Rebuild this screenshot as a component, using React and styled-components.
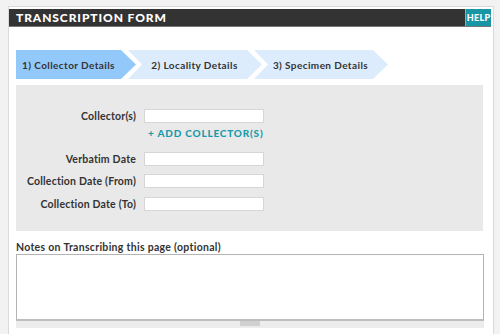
import React from "react";
import styled, { createGlobalStyle } from "styled-components";

const Global = createGlobalStyle`
  html, body { margin: 0; padding: 0; }
  body {
    background: #f2f2f2;
    font-family: Lato, "DejaVu Sans", sans-serif;
    width: 500px;
    height: 334px;
    overflow: hidden;
  }
`;

const Page = styled.div`
  padding: 6px 0 0 8px;
`;

const Panel = styled.div`
  width: 484px;
  height: 340px;
  background: #fff;
  border: 1px solid #dadada;
  border-bottom: none;
  padding-top: 2px;
  box-sizing: content-box;
`;

const Header = styled.div`
  display: flex;
  width: 482px;
  height: 18px;
  background: #333;
  border-bottom: 1px solid #777;
  box-sizing: border-box;
`;

const Title = styled.div`
  flex: 1;
  color: #fff;
  font-weight: 900;
  font-size: 12px;
  letter-spacing: 0.9px;
  line-height: 18px;
  padding-left: 7px;
`;

const Help = styled.div`
  width: 25px;
  background: #1996a6;
  color: #fff;
  font-weight: 900;
  font-size: 9px;
  letter-spacing: 0.3px;
  line-height: 17px;
  text-align: center;
  border-left: 1px solid #6fb9c3;
`;

const Body = styled.div`
  padding: 23px 0 0 7px;
`;

const Tabs = styled.div`
  display: flex;
  height: 29px;
`;

const Tab = styled.div`
  flex: none;
  width: ${(p) => (p.$first ? 120 : 134)}px;
  margin-left: ${(p) => (p.$first ? 0 : -8)}px;
  height: 29px;
  background: ${(p) => (p.$active ? "#93c8fa" : "#dcecfd")};
  clip-path: ${(p) =>
    p.$first
      ? "polygon(0 0, 105px 0, 120px 50%, 105px 100%, 0 100%)"
      : "polygon(0 0, 119px 0, 134px 50%, 119px 100%, 0 100%, 14px 50%)"};
  padding: 0 15px 0 ${(p) => (p.$first ? 0 : 14)}px;
  box-sizing: border-box;
  display: flex;
  align-items: center;
  justify-content: center;
  color: #333;
  font-weight: 700;
  font-size: 10px;
  letter-spacing: 0.4px;
`;

const FormBox = styled.div`
  margin-top: 6px;
  width: 467px;
  height: 146px;
  background: #e9e9e9;
  padding-top: 24px;
  box-sizing: border-box;
  display: grid;
  grid-template-columns: 120px 120px;
  column-gap: 8px;
  align-content: start;
`;

const Label = styled.div`
  text-align: right;
  color: #333;
  font-weight: 700;
  font-size: 10.5px;
  letter-spacing: 0.2px;
  height: 14px;
  line-height: 14px;
  margin-bottom: ${(p) => p.$mb || 0}px;
`;

const Input = styled.div`
  height: 14px;
  background: #fff;
  border: 1px solid #d6d6d6;
  box-sizing: border-box;
  margin-bottom: ${(p) => p.$mb || 0}px;
`;

const AddLink = styled.div`
  grid-column: 2;
  color: #1a9bab;
  font-weight: 900;
  font-size: 10px;
  letter-spacing: 0.8px;
  line-height: 14px;
  padding-left: 4px;
  margin: 3px 0 12px;
  white-space: nowrap;
`;

const NotesLabel = styled.div`
  margin-top: 10px;
  color: #333;
  font-weight: 700;
  font-size: 10.5px;
  letter-spacing: 0.3px;
  line-height: 13px;
`;

const NotesArea = styled.div`
  width: 468px;
  height: 67px;
  background: #fff;
  border: 1px solid #b4b4b4;
  border-bottom: 2px solid #bdbdbd;
  box-sizing: border-box;
`;

const ResizeBar = styled.div`
  width: 468px;
  height: 7px;
  background: #ececec;
  display: flex;
  justify-content: center;
`;

const Grip = styled.div`
  width: 20px;
  height: 5px;
  background: #d0d0d0;
`;

export default function App() {
  return (
    <>
      <Global />
      <Page>
        <Panel>
          <Header>
            <Title>TRANSCRIPTION FORM</Title>
            <Help>HELP</Help>
          </Header>
          <Body>
            <Tabs>
              <Tab $first $active>1) Collector Details</Tab>
              <Tab>2) Locality Details</Tab>
              <Tab>3) Specimen Details</Tab>
            </Tabs>
            <FormBox>
              <Label>Collector(s)</Label>
              <Input />
              <AddLink>+ ADD COLLECTOR(S)</AddLink>
              <Label $mb={8}>Verbatim Date</Label>
              <Input $mb={8} />
              <Label $mb={9}>Collection Date (From)</Label>
              <Input $mb={9} />
              <Label>Collection Date (To)</Label>
              <Input />
            </FormBox>
            <NotesLabel>Notes on Transcribing this page (optional)</NotesLabel>
            <NotesArea />
            <ResizeBar>
              <Grip />
            </ResizeBar>
          </Body>
        </Panel>
      </Page>
    </>
  );
}
